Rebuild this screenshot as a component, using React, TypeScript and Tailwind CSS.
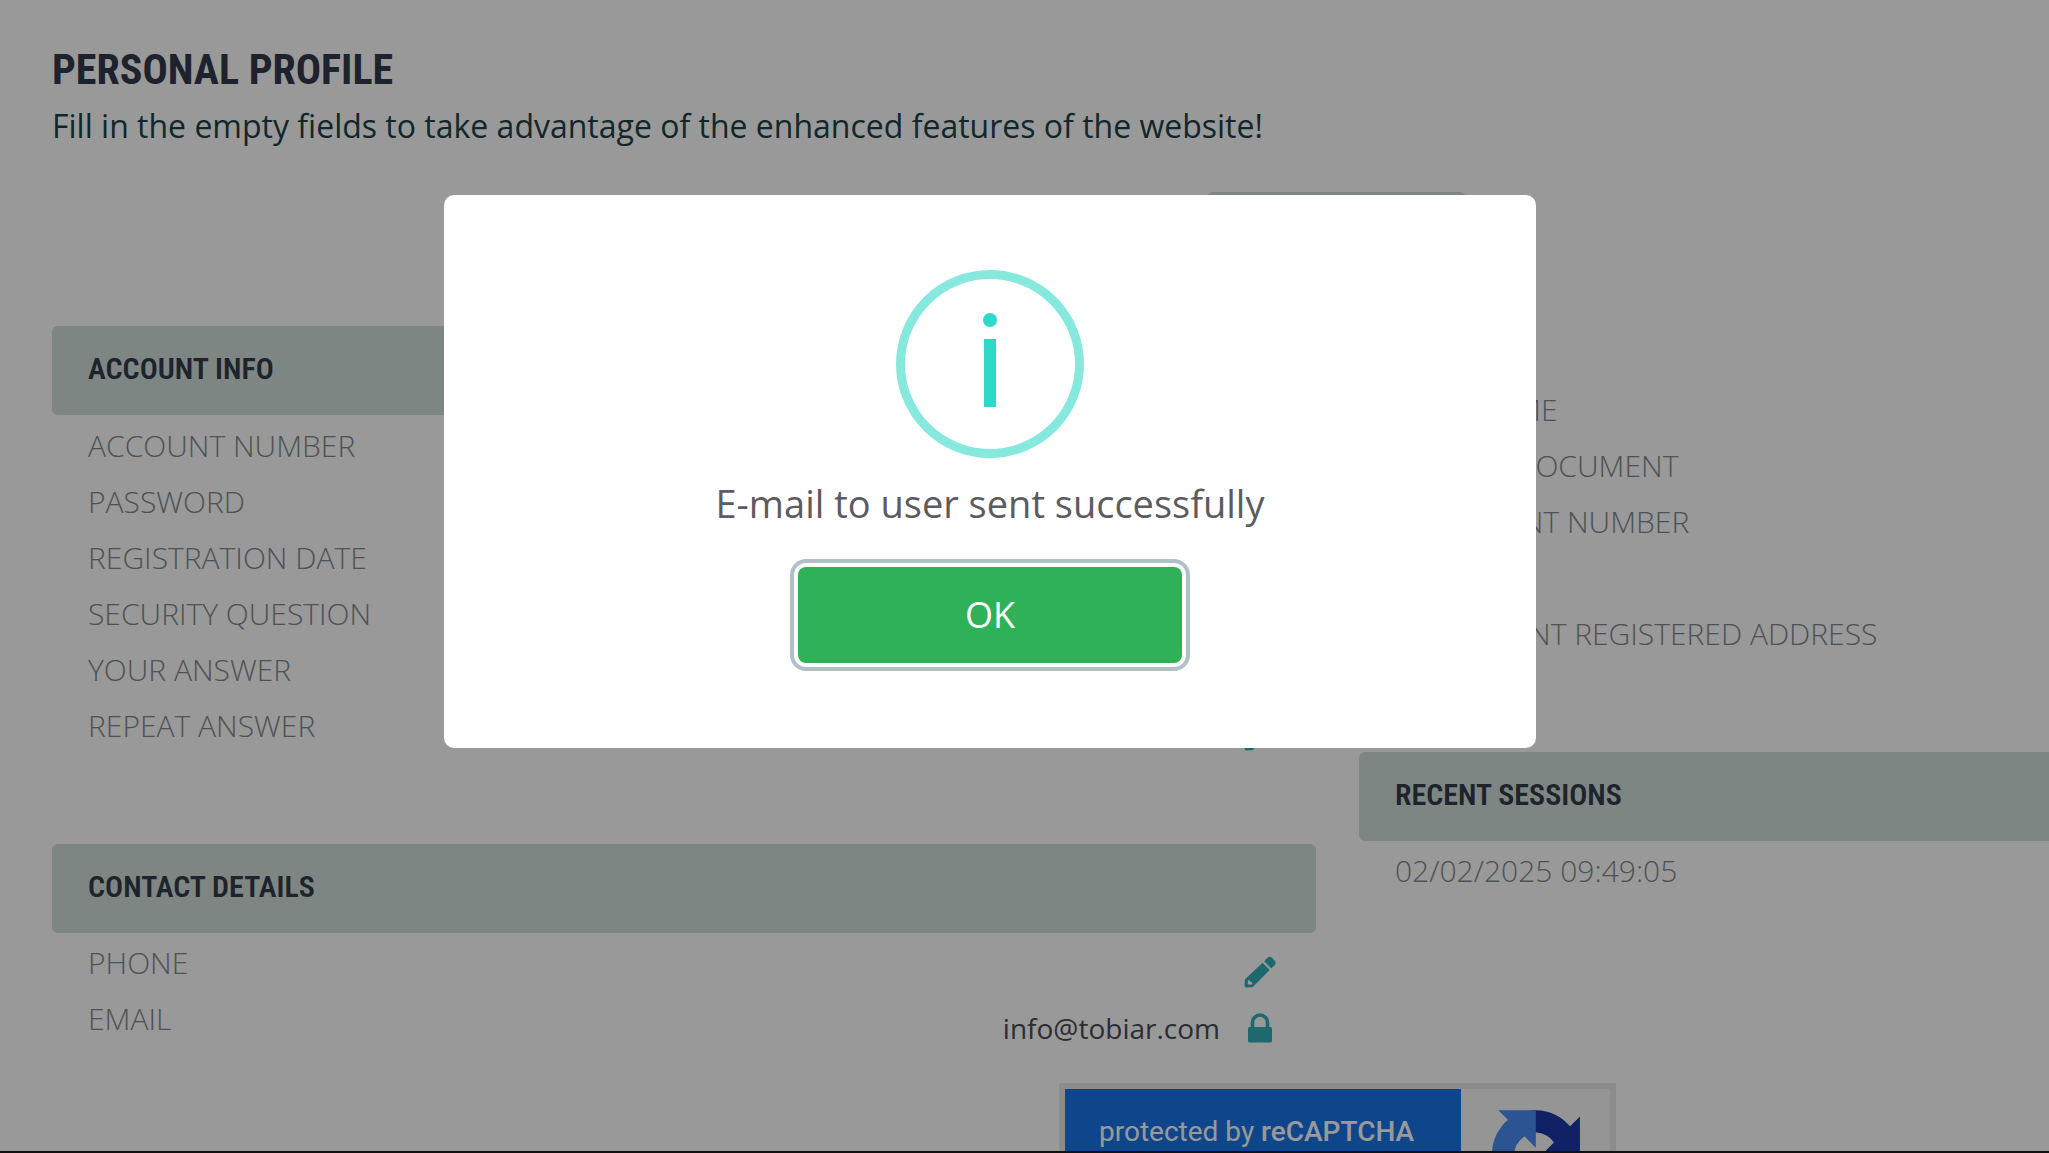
import React from "react";

function SectionBar({ title }: { title: string }) {
  return (
    <div className="flex h-[89px] items-center rounded-md bg-[#d3dfdd] px-9 pb-1">
      <h2 className="font-['Roboto_Condensed','Roboto',sans-serif] text-[30px] leading-none font-semibold whitespace-nowrap text-[#343b4a]">
        {title}
      </h2>
    </div>
  );
}

function Row({ label, children }: { label: string; children?: React.ReactNode }) {
  return (
    <li className="flex h-14 items-center justify-between pr-10 pl-9">
      <span className="text-[30px] leading-none font-light whitespace-nowrap text-[#83898d]">{label}</span>
      {children && <div className="flex items-center gap-6 pt-[18px]">{children}</div>}
    </li>
  );
}

function EditButton({ label }: { label: string }) {
  return (
    <button type="button" aria-label={label} className="flex w-8 justify-center text-[#32afb8]">
      <svg viewBox="0 0 32 32" width="32" height="32" fill="currentColor" aria-hidden="true">
        <path d="M20.2 5.2 23.6 1.6Q25.6-.2 27.6 1.6L30.6 4.6Q32.6 6.800 30.800 9L27.200 12.600Z" />
        <path
          fillRule="evenodd"
          d="M18.600 6.800 25.600 14 9.600 30.200Q8.600 31.200 7.200 31.200L2.600 31.400Q.6 31.400.6 29.400L.8 24.800Q.8 23.600 1.800 22.600ZM4 24.400 3.600 28 5.200 28.800 8.600 28.200 7.800 26 5.800 25.800 5.600 24Z"
        />
      </svg>
    </button>
  );
}

function LockIcon() {
  return (
    <span className="flex w-8 justify-center text-[#32afb8]">
      <svg viewBox="0 0 24 30" width="24" height="30" role="img" aria-label="Locked">
        <path d="M4.500 16V9.500a7.500 7.500 0 0 1 15 0V16" fill="none" stroke="currentColor" strokeWidth="3.600" />
        <rect x="0" y="14" width="24" height="15.500" rx="1.500" fill="currentColor" />
      </svg>
    </span>
  );
}

function Recaptcha() {
  return (
    <aside className="flex w-[557px] border-6 border-[#e9e9e9] bg-[#f9f9f9]">
      <div className="flex h-40 w-[396px] bg-[#1a73e8] pt-[27px] pl-[34px]">
        <span className="font-['Roboto',sans-serif] text-[28px] leading-8 whitespace-nowrap text-white">
          protected by <strong className="font-medium">reCAPTCHA</strong>
        </span>
      </div>
      <div className="flex flex-1 justify-center pt-[21px]">
        <svg viewBox="0 0 64 64" width="88" height="88" role="img" aria-label="reCAPTCHA logo">
          <path d="M64 31.955l-.033-1.37V4.687l-7.16 7.16C50.948 4.674 42.033.093 32.05.093c-10.4 0-19.622 4.96-25.458 12.64l11.736 11.86a15.55 15.55 0 0 1 4.754-5.334c2.05-1.6 4.952-2.906 8.968-2.906.485 0 .86.057 1.135.163 4.976.393 9.288 3.14 11.828 7.124l-8.307 8.307L64 31.953" fill="#1c3aa9" />
          <path d="M31.862.094l-1.37.033H4.594l7.16 7.16C4.58 13.147 0 22.06 0 32.046c0 10.4 4.96 19.622 12.64 25.458L24.5 45.768a15.55 15.55 0 0 1-5.334-4.754c-1.6-2.05-2.906-4.952-2.906-8.968 0-.485.057-.86.163-1.135.393-4.976 3.14-9.288 7.124-11.828l8.307 8.307L31.86.095" fill="#4a8af4" />
          <path d="M.001 32.045l.033 1.37v25.898l7.16-7.16c5.86 7.173 14.774 11.754 24.76 11.754 10.4 0 19.622-4.96 25.458-12.64l-11.736-11.86a15.55 15.55 0 0 1-4.754 5.334c-2.05 1.6-4.952 2.906-8.968 2.906-.485 0-.86-.057-1.135-.163-4.976-.393-9.288-3.14-11.828-7.124l8.307-8.307L0 32.048" fill="#ababab" />
        </svg>
      </div>
    </aside>
  );
}

function SuccessDialog() {
  return (
    <div className="absolute inset-0 flex items-start justify-center bg-black/40 pt-[195px] pr-[69px]">
      <div
        role="alertdialog"
        aria-modal="true"
        aria-labelledby="dialog-message"
        className="flex w-full max-w-[1092px] flex-col items-center rounded-[10px] bg-white pt-[75px] pb-[85px]"
      >
        <div className="flex size-[188px] items-center justify-center rounded-full border-9 border-[#87e8dd] pb-2">
          <svg viewBox="0 0 20 100" width="20" height="100" fill="#2fd9c9" aria-hidden="true">
            <circle cx="10" cy="10" r="7" />
            <rect x="4" y="29" width="12" height="68" />
          </svg>
        </div>
        <p id="dialog-message" className="mt-[15px] text-[38px] leading-[60px] text-[#5b5b60]">
          E-mail to user sent successfully
        </p>
        <button
          type="button"
          className="mt-[34px] h-24 w-96 rounded-lg bg-[#2fb257] text-[36px] text-white ring-4 ring-[#b0c0c6] ring-offset-4 ring-offset-white"
        >
          OK
        </button>
      </div>
    </div>
  );
}

export default function App() {
  return (
    <div className="relative h-screen overflow-hidden border-b-2 border-[#111] bg-white font-['Open_Sans',sans-serif]">
      <main>
        <header className="px-[52px] pt-11">
          <h1 className="font-['Roboto_Condensed','Roboto',sans-serif] text-[42px] leading-[52px] font-bold text-[#323a4c]">
            PERSONAL PROFILE
          </h1>
          <p className="text-[32px] leading-[60px] text-[#1d4248]">
            Fill in the empty fields to take advantage of the enhanced features of the website!
          </p>
        </header>
        <div className="mt-9 flex justify-end pr-[583px]">
          <div className="h-[60px] w-[259px] rounded-md bg-[#d3dfdd]" />
        </div>
        <div className="mt-[74px] grid grid-cols-[1264fr_690fr] gap-[43px] pl-[52px]">
          <div>
            <section>
              <SectionBar title="ACCOUNT INFO" />
              <ul className="pt-[3px]">
                <Row label="ACCOUNT NUMBER" />
                <Row label="PASSWORD" />
                <Row label="REGISTRATION DATE" />
                <Row label="SECURITY QUESTION" />
                <Row label="YOUR ANSWER" />
                <Row label="REPEAT ANSWER">
                  <EditButton label="Edit answer" />
                </Row>
              </ul>
            </section>
            <section className="mt-[90px]">
              <SectionBar title="CONTACT DETAILS" />
              <ul className="pt-0.5">
                <Row label="PHONE">
                  <EditButton label="Edit phone" />
                </Row>
                <Row label="EMAIL">
                  <span className="text-[28px] leading-none text-[#4a4c54]">info@tobiar.com</span>
                  <LockIcon />
                </Row>
              </ul>
            </section>
          </div>
          <div className="min-w-0">
            <ul className="pt-14">
              <Row label="FIRST NAME" />
              <Row label="TYPE OF DOCUMENT" />
              <Row label="DOCUMENT NUMBER" />
              <Row label="COUNTRY" />
              <Row label="PERMANENT REGISTERED ADDRESS" />
            </ul>
            <section className="mt-[90px] -mr-2">
              <SectionBar title="RECENT SESSIONS" />
              <ul className="pt-0.5">
                <Row label="02/02/2025 09:49:05" />
              </ul>
            </section>
          </div>
        </div>
      </main>
      <div className="absolute top-[1083px] right-[433px]">
        <Recaptcha />
      </div>
      <SuccessDialog />
    </div>
  );
}
